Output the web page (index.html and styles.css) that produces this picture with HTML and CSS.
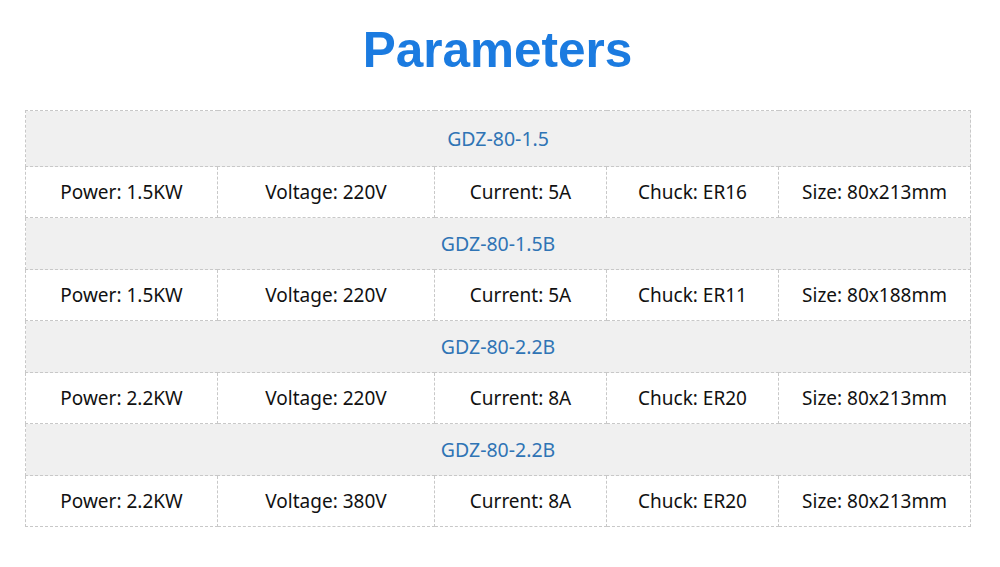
FILE: index.html
```html
<!DOCTYPE html>
<html>
<head>
<meta charset="utf-8">
<link rel="stylesheet" href="styles.css">
</head>
<body>
<div class="page">
  <h1 class="title">Parameters</h1>
  <table class="params">
    <colgroup>
      <col class="c1"><col class="c2"><col class="c3"><col class="c4"><col class="c5">
    </colgroup>
    <tr class="model first"><td colspan="5">GDZ-80-1.5</td></tr>
    <tr class="spec"><td>Power: 1.5KW</td><td>Voltage: 220V</td><td>Current: 5A</td><td>Chuck: ER16</td><td>Size: 80x213mm</td></tr>
    <tr class="model"><td colspan="5">GDZ-80-1.5B</td></tr>
    <tr class="spec"><td>Power: 1.5KW</td><td>Voltage: 220V</td><td>Current: 5A</td><td>Chuck: ER11</td><td>Size: 80x188mm</td></tr>
    <tr class="model"><td colspan="5">GDZ-80-2.2B</td></tr>
    <tr class="spec"><td>Power: 2.2KW</td><td>Voltage: 220V</td><td>Current: 8A</td><td>Chuck: ER20</td><td>Size: 80x213mm</td></tr>
    <tr class="model"><td colspan="5">GDZ-80-2.2B</td></tr>
    <tr class="spec"><td>Power: 2.2KW</td><td>Voltage: 380V</td><td>Current: 8A</td><td>Chuck: ER20</td><td>Size: 80x213mm</td></tr>
  </table>
</div>
</body>
</html>
```
FILE: styles.css
```css
html, body { margin: 0; padding: 0; background: #fff; }
.page { padding: 0 30px 0 25px; }
.title {
  margin: 0;
  height: 110px;
  box-sizing: border-box;
  padding-top: 20px;
  text-align: center;
  font-family: "Liberation Sans", Arial, sans-serif;
  font-weight: bold;
  font-size: 49.5px;
  line-height: 60px;
  color: #1b7be0;
}
.params {
  width: 945px;
  border-collapse: collapse;
  table-layout: fixed;
  font-family: "Noto Sans", "Open Sans", sans-serif;
  font-size: 19px;
}
.c1 { width: 192px; }
.c2 { width: 217px; }
.c3 { width: 172px; }
.c4 { width: 172px; }
.c5 { width: 192px; }
.params td {
  border: 1px dashed #c8c8c8;
  text-align: center;
  padding: 0;
  color: #111;
  line-height: 24px;
}
.model td { background: #f0f0f0; color: #2f74b5; height: 51px; font-size: 19.5px; }
.model.first td { height: 55px; }
.spec td { height: 50px; }
```
